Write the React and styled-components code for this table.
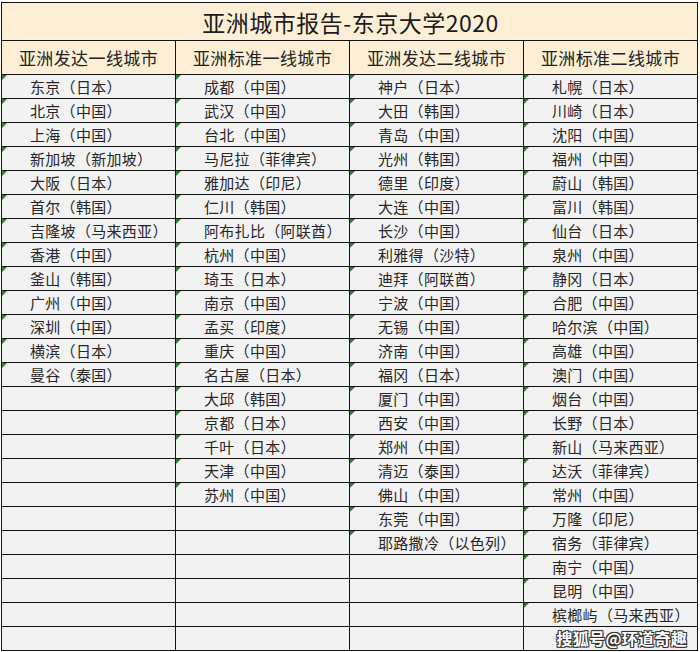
import React from 'react'
import styled, { createGlobalStyle } from 'styled-components'

const GlobalStyle = createGlobalStyle`
  html, body {
    margin: 0;
    padding: 0;
    background: #ffffff;
  }
  body {
    font-family: "Noto Sans CJK SC", "Noto Sans", sans-serif;
  }
`;

const Page = styled.div`
  position: relative;
  width: 700px;
  height: 652px;
  padding: 2px 0 0 1px;
  box-sizing: border-box;
`;

const Sheet = styled.div`
  display: grid;
  grid-template-columns: repeat(4, 174px);
  border-top: 1px solid #111;
  border-left: 1px solid #111;
  width: max-content;
`;

const Title = styled.div`
  grid-column: 1 / -1;
  height: 37px;
  background: #fcefd6;
  border-right: 1px solid #111;
  border-bottom: 1px solid #111;
  display: flex;
  align-items: center;
  justify-content: center;
  font-size: 23px;
  color: #1c1c1c;
  letter-spacing: 0.5px;
  padding-left: 2px;
`;

const Head = styled.div`
  height: 33px;
  background: #fcefd6;
  border-right: 1px solid #111;
  border-bottom: 1px solid #111;
  display: flex;
  align-items: center;
  justify-content: center;
  font-size: 17px;
  color: #222;
  letter-spacing: 0.4px;
`;

const Cell = styled.div`
  position: relative;
  height: 23px;
  background: #f2f2f2;
  border-right: 1px solid #111;
  border-bottom: 1px solid #111;
  display: flex;
  align-items: center;
  padding-left: 28px;
  font-size: 15px;
  color: #262626;
  letter-spacing: 0.3px;
  white-space: nowrap;

  &::before {
    content: "";
    display: ${(p) => (p.$flag ? 'block' : 'none')};
    position: absolute;
    top: 0;
    left: 0;
    border-top: 5px solid #2f7d32;
    border-right: 5px solid transparent;
  }
`;

const Watermark = styled.div`
  position: absolute;
  right: 13px;
  bottom: 5px;
  font-size: 16px;
  line-height: 18px;
  font-weight: 700;
  color: #ffffff;
  letter-spacing: 0.3px;
  text-shadow: -1px -1px 0 #333, 1px -1px 0 #333, -1px 1px 0 #333, 1px 1px 0 #333, 0 0 2px #000;
`;

const heads = ['亚洲发达一线城市', '亚洲标准一线城市', '亚洲发达二线城市', '亚洲标准二线城市'];

const cols = [
  ['东京（日本）', '北京（中国）', '上海（中国）', '新加坡（新加坡）', '大阪（日本）', '首尔（韩国）', '吉隆坡（马来西亚）', '香港（中国）', '釜山（韩国）', '广州（中国）', '深圳（中国）', '横滨（日本）', '曼谷（泰国）'],
  ['成都（中国）', '武汉（中国）', '台北（中国）', '马尼拉（菲律宾）', '雅加达（印尼）', '仁川（韩国）', '阿布扎比（阿联酋）', '杭州（中国）', '琦玉（日本）', '南京（中国）', '孟买（印度）', '重庆（中国）', '名古屋（日本）', '大邱（韩国）', '京都（日本）', '千叶（日本）', '天津（中国）', '苏州（中国）'],
  ['神户（日本）', '大田（韩国）', '青岛（中国）', '光州（韩国）', '德里（印度）', '大连（中国）', '长沙（中国）', '利雅得（沙特）', '迪拜（阿联酋）', '宁波（中国）', '无锡（中国）', '济南（中国）', '福冈（日本）', '厦门（中国）', '西安（中国）', '郑州（中国）', '清迈（泰国）', '佛山（中国）', '东莞（中国）', '耶路撒冷（以色列）'],
  ['札幌（日本）', '川崎（日本）', '沈阳（中国）', '福州（中国）', '蔚山（韩国）', '富川（韩国）', '仙台（日本）', '泉州（中国）', '静冈（日本）', '合肥（中国）', '哈尔滨（中国）', '高雄（中国）', '澳门（中国）', '烟台（中国）', '长野（日本）', '新山（马来西亚）', '达沃（菲律宾）', '常州（中国）', '万隆（印尼）', '宿务（菲律宾）', '南宁（中国）', '昆明（中国）', '槟榔屿（马来西亚）'],
];

const ROWS = 24;

export default function App() {
  const rows = [];
  for (let r = 0; r < ROWS; r++) {
    cols.forEach((col, c) => {
      const text = col[r] || '';
      rows.push(
        <Cell key={`${r}-${c}`} $flag={!!text}>
          {text}
        </Cell>
      );
    });
  }

  return (
    <Page>
      <GlobalStyle />
      <Sheet>
        <Title>亚洲城市报告-东京大学2020</Title>
        {heads.map((h) => (
          <Head key={h}>{h}</Head>
        ))}
        {rows}
      </Sheet>
      <Watermark>搜狐号@环道奇趣</Watermark>
    </Page>
  );
}
